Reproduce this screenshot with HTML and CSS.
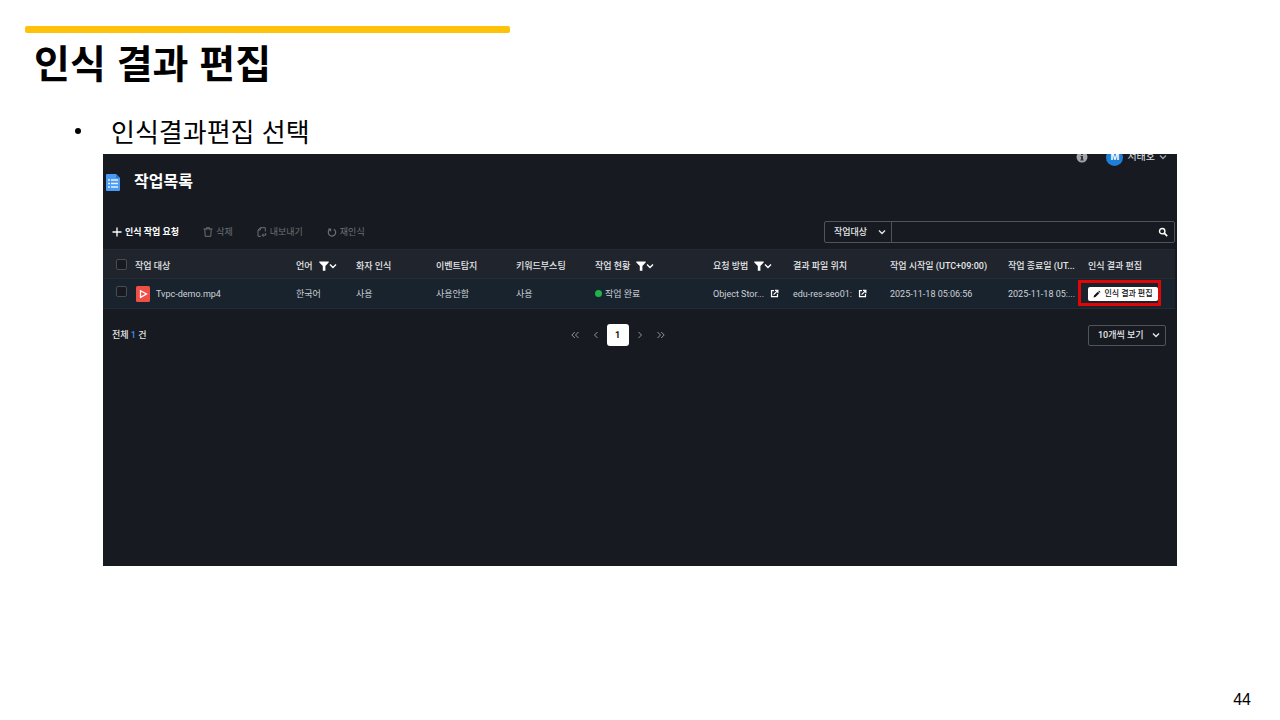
FILE: index.html
```html
<!DOCTYPE html>
<html lang="ko">
<head>
<meta charset="utf-8">
<meta name="viewport" content="width=device-width, initial-scale=1">
<title>인식 결과 편집</title>
<link rel="stylesheet" href="styles.css">
</head>
<body>
<svg class="sprite" aria-hidden="true">
  <symbol id="chevron" viewBox="0 0 8 8"><path d="M1 2.500l3 3 3-3" fill="none" stroke="currentColor" stroke-width="1.400"/></symbol>
  <symbol id="filter" viewBox="0 0 10 10"><path d="M.3.6h9.400v1L6.400 5v4.700H3.800V5L.3 1.600z" fill="currentColor"/></symbol>
  <symbol id="external" viewBox="0 0 10 10"><path d="M4.500 1.800H1.700v6.700h6.600V5.500M5.500 1.600h3.200v3.200M8.500 1.800L4 6.300" fill="none" stroke="currentColor" stroke-width="1.400"/></symbol>
</svg>
<main class="slide">
  <div class="accent"></div>
  <h1 class="slide-title">인식 결과 편집</h1>
  <ul class="points"><li class="point">인식결과편집 선택</li></ul>

  <section class="panel">
    <header class="userbar">
      <svg class="info" viewBox="0 0 12 12"><circle cx="6" cy="6" r="5.500" fill="#a3a5a8"/><path d="M5 2.500h2v1.500H5zM4.500 5H7v3.500h.8v1H4.300v-1H5V6h-.5z" fill="#30343a"/></svg>
      <button class="user" type="button">
        <span class="avatar">M</span>
        <span>서태호</span>
        <svg class="chev thin"><use href="#chevron"/></svg>
      </button>
    </header>

    <div class="heading">
      <svg class="doc" viewBox="0 0 14 17"><path d="M1 0h9l4 4v12a1 1 0 0 1-1 1H1a1 1 0 0 1-1-1V1a1 1 0 0 1 1-1z" fill="#4b9bf5"/><path d="M10 0l4 4h-4z" fill="#2d76c8"/><path d="M2 6h2M2 9.500h2M2 13h2M5 6h7M5 9.500h7M5 13h7" stroke="#e4f1ff" stroke-width="1.500"/></svg>
      <h2 class="heading-text">작업목록</h2>
    </div>

    <div class="toolbar">
      <div class="actions">
        <button class="action primary" type="button"><svg class="icon" viewBox="0 0 10 10"><path d="M5 .5v9M.5 5h9" stroke="currentColor" stroke-width="1.300"/></svg>인식 작업 요청</button>
        <button class="action" type="button" disabled><svg class="icon" viewBox="0 0 10 10"><path d="M.5 2h9M3.500 2V.7h3V2M1.800 2l.4 7.300h5.600L8.200 2" fill="none" stroke="currentColor"/></svg>삭제</button>
        <button class="action" type="button" disabled><svg class="icon" viewBox="0 0 10 10"><path d="M4 9.300H1V3L3.300.7H8.300V4.500M3.300.7V3H1M8.700 6v2.200H5.200M6.600 6.700L5.100 8.200l1.500 1.500" fill="none" stroke="currentColor"/></svg>내보내기</button>
        <button class="action" type="button" disabled><svg class="icon" viewBox="0 0 10 10"><path d="M6.800 2.200A3.700 3.700 0 1 1 3 2.300M1.300 2.200H3.600V4.300" fill="none" stroke="currentColor" stroke-width="1.200"/></svg>재인식</button>
      </div>
      <form class="search" role="search">
        <div class="picker field">
          <select class="select" aria-label="검색 조건"><option>작업대상</option></select>
          <svg class="chev caret"><use href="#chevron"/></svg>
        </div>
        <input class="query" type="text" aria-label="검색어">
        <button class="go" type="button" aria-label="검색"><svg class="icon" viewBox="0 0 10 10"><circle cx="4.200" cy="4.200" r="2.700" fill="none" stroke="currentColor" stroke-width="1.400"/><path d="M6.200 6.200l3 3" stroke="currentColor" stroke-width="1.700"/></svg></button>
      </form>
    </div>

    <table class="jobs">
      <colgroup><col class="w-check"><col class="w-name"><col class="w-lang"><col class="w-mid"><col class="w-mid"><col class="w-status"><col class="w-wide"><col class="w-mid"><col class="w-start"><col class="w-wide"><col class="w-mid"><col class="w-edit"></colgroup>
      <thead>
        <tr>
          <th class="tick-cell"><input class="tick" type="checkbox" aria-label="전체 선택"></th>
          <th>작업 대상</th>
          <th><span class="cell">언어<span class="filter"><svg class="icon"><use href="#filter"/></svg><svg class="chev"><use href="#chevron"/></svg></span></span></th>
          <th>화자 인식</th>
          <th>이벤트탐지</th>
          <th>키워드부스팅</th>
          <th><span class="cell">작업 현황<span class="filter"><svg class="icon"><use href="#filter"/></svg><svg class="chev"><use href="#chevron"/></svg></span></span></th>
          <th><span class="cell">요청 방법<span class="filter"><svg class="icon"><use href="#filter"/></svg><svg class="chev"><use href="#chevron"/></svg></span></span></th>
          <th>결과 파일 위치</th>
          <th>작업 시작일 (UTC+09:00)</th>
          <th>작업 종료일 (UT...</th>
          <th>인식 결과 편집</th>
        </tr>
      </thead>
      <tbody>
        <tr>
          <td class="tick-cell"><input class="tick" type="checkbox" aria-label="Tvpc-demo.mp4 선택"></td>
          <td><span class="cell"><svg class="media" viewBox="0 0 14 16"><rect width="14" height="16" rx="1.500" fill="#f04f45"/><path d="M4.500 4.800v6.600L10.500 8z" fill="none" stroke="#fff" stroke-width="1.300"/></svg>Tvpc-demo.mp4</span></td>
          <td>한국어</td>
          <td>사용</td>
          <td>사용안함</td>
          <td>사용</td>
          <td><span class="status">작업 완료</span></td>
          <td><span class="cell">Object Stor...<svg class="link"><use href="#external"/></svg></span></td>
          <td><span class="cell">edu-res-seo01:<svg class="link"><use href="#external"/></svg></span></td>
          <td>2025-11-18 05:06:56</td>
          <td>2025-11-18 05:...</td>
          <td><span class="marked"><button class="edit" type="button"><svg class="pencil" viewBox="0 0 8 8"><path d="M.5 7.500l.5-2L4.800 1.700l1.500 1.500L2.500 7zM5.300 1.200l.7-.7 1.500 1.500-.7.7z" fill="#111"/></svg>인식 결과 편집</button></span></td>
        </tr>
      </tbody>
    </table>

    <footer class="pager">
      <span class="total">전체 <span class="count">1</span> 건</span>
      <nav class="pages" aria-label="페이지">
        <button class="step" type="button" aria-label="처음"><svg class="icon" viewBox="0 0 10 10"><path d="M4.800 2l-3 3 3 3M8.500 2l-3 3 3 3" fill="none" stroke="currentColor"/></svg></button>
        <button class="step" type="button" aria-label="이전"><svg class="icon" viewBox="0 0 10 10"><path d="M6.500 2l-3 3 3 3" fill="none" stroke="currentColor"/></svg></button>
        <button class="current" type="button">1</button>
        <button class="step" type="button" aria-label="다음"><svg class="icon" viewBox="0 0 10 10"><path d="M3.500 2l3 3-3 3" fill="none" stroke="currentColor"/></svg></button>
        <button class="step" type="button" aria-label="마지막"><svg class="icon" viewBox="0 0 10 10"><path d="M1.500 2l3 3-3 3M5.200 2l3 3-3 3" fill="none" stroke="currentColor"/></svg></button>
      </nav>
      <div class="picker size">
        <select class="select" aria-label="페이지당 개수"><option>10개씩 보기</option></select>
        <svg class="chev caret"><use href="#chevron"/></svg>
      </div>
    </footer>
  </section>

  <div class="page-number">44</div>
</main>
</body>
</html>
```
FILE: styles.css
```css
* { box-sizing: border-box; }
body { margin: 0; background: #fff; color: #000; font-family: "Liberation Sans", "Noto Sans CJK KR", sans-serif; }
button, select, input { font: inherit; color: inherit; margin: 0; }
button { border: 0; padding: 0; background: none; }
svg { flex: none; display: block; }
.sprite { position: absolute; width: 0; height: 0; }

.slide { display: flex; flex-direction: column; min-height: 100vh; padding: 26px 25px 9px; }
.accent { width: 485px; height: 7px; border-radius: 2px; background: #ffc20a; }
.slide-title { margin: 0 0 0 9px; padding-top: 3px; font-size: 39px; line-height: 50px; font-weight: 700; font-family: "Noto Sans CJK KR", sans-serif; }
.points { margin: 0; padding: 27px 0 5px 50px; list-style: none; }
.point { display: flex; align-items: center; gap: 30px; font-size: 26px; line-height: 36px; font-weight: 400; font-family: "Noto Sans CJK KR", sans-serif; }
.point::before { content: ""; width: 6px; height: 6px; border-radius: 50%; background: #000; }

.panel { margin: 0 78px; min-height: 412px; overflow: hidden; background: #171b21; color: #e4e6e9; font-family: Roboto, "Noto Sans CJK KR", sans-serif; font-size: 9px; line-height: 14px; }
.icon { width: 10px; height: 10px; }
.chev { width: 8px; height: 8px; }
.thin { color: #9a9da1; }

.userbar { display: flex; justify-content: flex-end; align-items: center; gap: 18px; height: 18px; margin-top: -6px; padding-right: 10px; }
.info { width: 12px; height: 12px; }
.user { display: flex; align-items: center; gap: 4px; font-size: 10px; }
.avatar { display: grid; place-items: center; width: 17px; height: 17px; border-radius: 50%; background: #1f7fd6; color: #fff; font-weight: 700; }

.heading { display: flex; align-items: center; gap: 14px; padding: 6px 0 0 3px; }
.doc { width: 14px; height: 17px; }
.heading-text { margin: 0; font-size: 16px; line-height: 20px; font-weight: 700; color: #fff; }

.toolbar { display: flex; justify-content: space-between; align-items: center; padding: 29px 2px 6px 9px; }
.actions { display: flex; gap: 24px; }
.action { display: flex; align-items: center; gap: 3px; color: #6c7075; }
.primary { color: #fff; font-weight: 700; }
.search { display: flex; width: 351px; height: 22px; border: 1px solid #50555b; border-radius: 2px; }
.picker { position: relative; display: flex; }
.select { width: 100%; appearance: none; border: 0; padding: 0 9px; background: transparent; outline: 0; font-weight: 500; }
.caret { position: absolute; right: 5px; top: 50%; margin-top: -4px; pointer-events: none; }
.field { flex: 0 0 67px; border-right: 1px solid #50555b; }
.query { flex: 1; min-width: 0; border: 0; background: transparent; outline: 0; }
.go { padding: 0 6px; color: #fff; }

.jobs { width: calc(100% - 2px); table-layout: fixed; border-collapse: separate; border-spacing: 0; }
.jobs th, .jobs td { height: 30px; padding: 0; text-align: left; vertical-align: middle; white-space: nowrap; border-bottom: 1px solid #252b33; }
.jobs th { background: #20252d; border-top: 1px solid #262b32; font-weight: 500; padding-top: 3px; }
.jobs td { background: #19232e; color: #ced2d7; }
.w-check { width: 32px; }
.w-name { width: 161px; }
.w-lang { width: 60px; }
.w-mid { width: 80px; }
.w-status { width: 79px; }
.w-wide { width: 118px; }
.w-start { width: 97px; }
.w-edit { width: 87px; }
.cell { display: flex; align-items: center; gap: 6px; }
.filter { display: flex; align-items: center; color: #fff; }
.tick { display: block; appearance: none; width: 11px; height: 11px; margin-left: 13px; border: 1px solid #484d53; border-radius: 2px; background: #171b21; }
.jobs .tick-cell { padding: 0 0 5px; }
.jobs th.tick-cell { padding: 0; }
.media { width: 14px; height: 16px; margin-left: 1px; }
.link { width: 9px; height: 9px; color: #fff; }
.status { display: flex; align-items: center; gap: 3px; }
.status::before { content: ""; width: 7px; height: 7px; border-radius: 50%; background: #22b24c; }
.marked { position: relative; display: inline-flex; vertical-align: middle; }
.marked::after { content: ""; position: absolute; inset: -7px -3px -5px -10px; border: 3px solid #e00606; pointer-events: none; }
.edit { display: flex; align-items: center; justify-content: center; gap: 3px; width: 70px; height: 14px; border-radius: 2px; background: #fff; color: #111; font-size: 8px; font-weight: 500; white-space: nowrap; }
.pencil { width: 8px; height: 8px; }

.pager { display: grid; grid-template-columns: 1fr auto 1fr; align-items: center; padding: 15px 11px 0 9px; }
.total { font-weight: 500; }
.count { color: #3f8cf0; }
.pages { display: flex; align-items: center; gap: 5px; margin-right: 43px; }
.step { padding: 0 3px; color: #92969b; }
.step + .current { margin-left: -2px; }
.current + .step { margin-left: -2px; }
.current { width: 22px; height: 22px; border-radius: 3px; background: #fff; color: #111; font-weight: 700; }
.size { justify-self: end; width: 78px; height: 21px; border: 1px solid #50555b; border-radius: 2px; }

.page-number { margin-top: auto; padding-right: 4px; text-align: right; font-size: 16px; line-height: 22px; }
```
